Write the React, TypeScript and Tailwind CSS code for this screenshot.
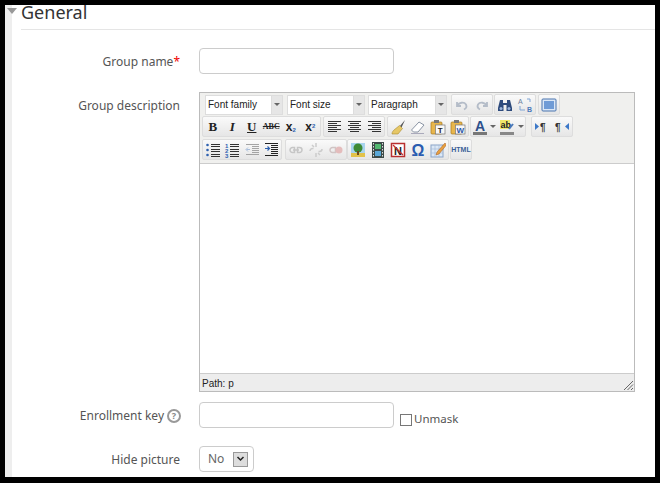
import type { ReactNode } from 'react';

const lines = (rows: [number, number][], color: string) =>
  rows.map(([x, y], i) => <rect key={i} x={x} y={y} width={15 - x} height="1" fill={color} />);

function Svg({ children, w = 16 }: { children: ReactNode; w?: number }) {
  return (
    <svg width={w} height="16" viewBox={`0 0 ${w} 16`} className="block">
      {children}
    </svg>
  );
}

function Align({ kind }: { kind: 'left' | 'center' | 'right' }) {
  const rows = [2, 4, 6, 8, 10, 12];
  const widths = [13, 9, 13, 9, 13, 9];
  return (
    <Svg>
      {rows.map((y, i) => {
        const w = widths[i];
        const x = kind === 'left' ? 2 : kind === 'right' ? 15 - w : 8.5 - w / 2;
        return <rect key={y} x={x} y={y} width={w} height="1" fill="#333" />;
      })}
    </Svg>
  );
}

function Clipboard({ letter, color }: { letter: string; color: string }) {
  return (
    <Svg>
      <rect x="1" y="3" width="11" height="12" rx="1" fill="#e8b64c" stroke="#a87a1e" strokeWidth="0.7" />
      <rect x="4" y="1" width="5" height="3" fill="#777" />
      <rect x="5.5" y="6" width="9.5" height="9" fill="#f8f8f8" stroke="#777" strokeWidth="0.7" />
      <text x="10.2" y="14" fontSize="8" fontWeight="700" textAnchor="middle" fill={color} fontFamily="Liberation Sans, sans-serif">
        {letter}
      </text>
    </Svg>
  );
}

const icons: Record<string, ReactNode> = {
  undo: (
    <Svg>
      <path d="M3 5v4h4M3.5 8.5C5 5.5 10 4.500 12 7.500c1 2 0 4-2 5" fill="none" stroke="#b4bcc8" strokeWidth="1.800" />
    </Svg>
  ),
  redo: (
    <Svg>
      <path d="M13 5v4H9M12.500 8.500C11 5.500 6 4.500 4 7.500c-1 2 0 4 2 5" fill="none" stroke="#b4bcc8" strokeWidth="1.800" />
    </Svg>
  ),
  find: (
    <Svg>
      <path d="M3 3h3v3h4V3h3l2 8v3H9.500V8h-3v6H1v-3z" fill="#2d4a7c" />
      <circle cx="4" cy="11.500" r="1.500" fill="#9ab4da" />
      <circle cx="12" cy="11.500" r="1.500" fill="#9ab4da" />
    </Svg>
  ),
  replace: (
    <Svg>
      <text x="1" y="7" fontSize="7" fill="#6b7f9e" fontFamily="Liberation Sans, sans-serif">A</text>
      <text x="10" y="15" fontSize="7" fontWeight="700" fill="#4a78b8" fontFamily="Liberation Sans, sans-serif">B</text>
      <path d="M10 2l3 0 0 3M3 9v4h5" fill="none" stroke="#7fa4d4" strokeWidth="1" />
    </Svg>
  ),
  full: (
    <Svg>
      <rect x="1" y="2" width="14" height="12" rx="1" fill="#dbe7f6" stroke="#4a74ae" />
      <rect x="3" y="4" width="10" height="8" fill="#6f9bd6" />
    </Svg>
  ),
  brush: (
    <Svg>
      <path d="M15 1l-5 6 1.500 1.500z" fill="#555" />
      <path d="M9.500 6.500l3 3L8 15H2c0-2 1-3 2-4z" fill="#e6c766" stroke="#a88a30" strokeWidth="0.6" />
    </Svg>
  ),
  eraser: (
    <Svg>
      <path d="M9 3l5 3-6 7H3.500L1.500 11z" fill="#fff" stroke="#8a94a4" />
      <path d="M1 14.500h13" stroke="#aab" strokeWidth="1" />
    </Svg>
  ),
  pasteT: <Clipboard letter="T" color="#222" />,
  pasteW: <Clipboard letter="W" color="#2a56a8" />,
  fore: (
    <Svg>
      <text x="8" y="12" fontSize="14" fontWeight="700" textAnchor="middle" fill="#2c4f8c" fontFamily="Liberation Sans, sans-serif">A</text>
      <rect x="1" y="13" width="14" height="3" fill="#777" />
    </Svg>
  ),
  hilite: (
    <Svg>
      <rect x="1" y="1" width="10" height="9" fill="#f2e76a" />
      <text x="1.500" y="8.500" fontSize="9" fontWeight="700" fill="#222" fontFamily="Liberation Sans, sans-serif">ab</text>
      <path d="M10 10l4-5" stroke="#4a78b8" strokeWidth="2" />
      <rect x="1" y="13" width="14" height="3" fill="#888" />
    </Svg>
  ),
  ltr: (
    <Svg>
      <path d="M1 4l4 3.500L1 11z" fill="#3c78c8" />
      <text x="6" y="12" fontSize="10" fontWeight="700" fill="#333" fontFamily="Liberation Sans, sans-serif">¶</text>
    </Svg>
  ),
  rtl: (
    <Svg>
      <text x="1" y="12" fontSize="10" fontWeight="700" fill="#333" fontFamily="Liberation Sans, sans-serif">¶</text>
      <path d="M15 4l-4 3.500 4 3.500z" fill="#3c78c8" />
    </Svg>
  ),
  bul: (
    <Svg>
      {[3, 8, 13].map((y) => (
        <circle key={y} cx="2.500" cy={y} r="1.300" fill="#2f62b0" />
      ))}
      {lines([[6, 2], [6, 4], [6, 7], [6, 9], [6, 12], [6, 14]], '#333')}
    </Svg>
  ),
  num: (
    <Svg>
      {[6, 11, 16].map((y, i) => (
        <text key={y} x="1" y={y} fontSize="6" fontWeight="700" fill="#2f62b0" fontFamily="Liberation Sans, sans-serif">
          {i + 1}
        </text>
      ))}
      {lines([[6, 2], [6, 4], [6, 7], [6, 9], [6, 12], [6, 14]], '#333')}
    </Svg>
  ),
  outdent: (
    <Svg>
      {lines([[2, 2], [8, 4], [8, 6], [8, 8], [8, 10], [2, 12]], '#a4a4a4')}
      <path d="M6 7.500H2.500M4 5.500l-2 2 2 2" fill="none" stroke="#a8bedc" />
    </Svg>
  ),
  indent: (
    <Svg>
      {lines([[2, 1], [8, 3], [8, 5], [8, 7], [8, 9], [8, 11], [2, 13]], '#222')}
      <path d="M2 6.500h4M4.500 4.500l2 2-2 2" fill="none" stroke="#2f62b0" strokeWidth="1.200" />
    </Svg>
  ),
  link: (
    <Svg>
      <path d="M2 8a2.500 2.500 0 0 1 2.500-2.500h2v5h-2A2.500 2.500 0 0 1 2 8zM14 8a2.500 2.500 0 0 0-2.500-2.500h-2v5h2A2.500 2.500 0 0 0 14 8zM5 8h6" fill="none" stroke="#c6c6c6" strokeWidth="1.500" />
    </Svg>
  ),
  unlink: (
    <Svg>
      <path d="M2 9a2.500 2.500 0 0 1 2.500-2.500h1M14 7a2.500 2.500 0 0 1-2.500 2.500h-1M8 1v4M8 11v4M4 3l2 2M12 13l-2-2" fill="none" stroke="#cccccc" strokeWidth="1.500" />
    </Svg>
  ),
  anchor: (
    <Svg>
      <path d="M2 8a2.500 2.500 0 0 1 2.500-2.500h3v5h-3A2.500 2.500 0 0 1 2 8z" fill="none" stroke="#d0c4c4" strokeWidth="1.500" />
      <circle cx="11" cy="8" r="3.500" fill="#e4bcbc" />
    </Svg>
  ),
  image: (
    <Svg>
      <rect x="1" y="1" width="14" height="14" fill="#a8d4ee" />
      <rect x="1" y="11" width="14" height="4" fill="#e2c24a" />
      <circle cx="8" cy="6" r="4.500" fill="#3e8a34" />
      <rect x="7" y="9" width="2" height="4" fill="#6a4a20" />
    </Svg>
  ),
  media: (
    <Svg>
      <rect x="2" y="0" width="12" height="16" fill="#3c4a48" />
      <rect x="5" y="2" width="6" height="5" fill="#52b870" />
      <rect x="5" y="9" width="6" height="5" fill="#5aa8d8" />
      {[1, 4, 7, 10, 13].map((y) => (
        <g key={y}>
          <rect x="3" y={y} width="1" height="1.500" fill="#ddd" />
          <rect x="12" y={y} width="1" height="1.500" fill="#ddd" />
        </g>
      ))}
    </Svg>
  ),
  nonbreak: (
    <Svg>
      <rect x="1.500" y="1.500" width="13" height="13" fill="#fff" stroke="#b83030" strokeWidth="1.500" />
      <text x="8" y="12.500" fontSize="11" fontWeight="700" textAnchor="middle" fill="#222" fontFamily="Liberation Sans, sans-serif">N</text>
      <path d="M3 3l10 10" stroke="#c83030" strokeWidth="1.200" />
    </Svg>
  ),
  omega: (
    <Svg>
      <text x="8" y="14" fontSize="16" fontWeight="700" textAnchor="middle" fill="#2a5cb0" fontFamily="Liberation Sans, sans-serif">Ω</text>
    </Svg>
  ),
  edit: (
    <Svg>
      <rect x="1" y="3" width="12" height="12" fill="#dce8f6" stroke="#8aa4c8" />
      <path d="M1 7h12M1 11h12M5 3v12M9 3v12" stroke="#a8bcd8" strokeWidth="0.700" />
      <path d="M15 1L7 10l-1 3 3-1 7.500-9z" fill="#e8a040" stroke="#a05820" strokeWidth="0.500" />
    </Svg>
  ),
};

function Btn({ children, w = 'w-[20px]' }: { children: ReactNode; w?: string }) {
  return <div className={`flex h-[20px] ${w} items-center justify-center`}>{children}</div>;
}

function Group({ children, className = '' }: { children: ReactNode; className?: string }) {
  return (
    <div className={`flex h-[21px] items-center rounded-[2px] border border-[#dddddd] bg-gradient-to-b from-[#fafafa] to-[#e6e6e6] ${className}`}>
      {children}
    </div>
  );
}

function Arrow() {
  return <div className="h-0 w-0 border-x-[3px] border-t-[3px] border-x-transparent border-t-[#666666]" />;
}

function Combo({ label, className }: { label: string; className: string }) {
  return (
    <div className={`flex h-[20px] border border-[#dddddd] bg-white ${className}`}>
      <div className="flex-1 pl-[2px] font-['Liberation_Sans',sans-serif] text-[10px] leading-[18px] text-[#222222]">{label}</div>
      <div className="flex w-[11px] items-center justify-center border-l border-[#dddddd] bg-[#e6e6e6]">
        <Arrow />
      </div>
    </div>
  );
}

const glyph = "font-['Liberation_Serif',serif] font-bold text-[#222222] leading-none";
const tight = 'w-[19.5px]';

function Editor() {
  return (
    <div className="flex h-[300px] w-[436px] flex-col border border-[#bbbbbb] bg-white">
      <div className="flex h-[70px] flex-col gap-[1px] bg-[#f0f0ee] pl-[2px] pt-[1px]">
        <div className="flex items-center">
          <Combo label="Font family" className="ml-[3px] w-[78px]" />
          <Combo label="Font size" className="ml-[4px] w-[78px]" />
          <Combo label="Paragraph" className="ml-[3px] w-[79px]" />
          <Group className="ml-[4px]">
            <Btn>{icons.undo}</Btn>
            <Btn>{icons.redo}</Btn>
          </Group>
          <Group className="ml-[1px]">
            <Btn>{icons.find}</Btn>
            <Btn>{icons.replace}</Btn>
          </Group>
          <Group className="ml-[2px]">
            <Btn>{icons.full}</Btn>
          </Group>
        </div>
        <div className="flex items-center">
          <Group>
            <Btn w={tight}><span className={`${glyph} text-[13px]`}>B</span></Btn>
            <Btn w={tight}><span className={`${glyph} text-[13px] italic`}>I</span></Btn>
            <Btn w={tight}><span className={`${glyph} text-[13px] underline`}>U</span></Btn>
            <Btn w={tight}><span className={`${glyph} text-[8px] line-through`}>ABC</span></Btn>
            <Btn w={tight}><span className="font-['Liberation_Sans',sans-serif] text-[12px] font-bold leading-none text-[#222222]">x<sub className="text-[6px] text-[#2f62b0]">2</sub></span></Btn>
            <Btn w={tight}><span className="font-['Liberation_Sans',sans-serif] text-[12px] font-bold leading-none text-[#222222]">x<sup className="text-[6px] text-[#2f62b0]">2</sup></span></Btn>
          </Group>
          <Group className="ml-[2px]">
            <Btn><Align kind="left" /></Btn>
            <Btn><Align kind="center" /></Btn>
            <Btn><Align kind="right" /></Btn>
          </Group>
          <Group className="ml-[2px]">
            <Btn>{icons.brush}</Btn>
            <Btn>{icons.eraser}</Btn>
            <Btn>{icons.pasteT}</Btn>
            <Btn>{icons.pasteW}</Btn>
          </Group>
          <Group className="ml-[1px]">
            <Btn w="w-[18px]">{icons.fore}</Btn>
            <Btn w="w-[8px]"><Arrow /></Btn>
            <Btn>{icons.hilite}</Btn>
            <Btn w="w-[8px]"><Arrow /></Btn>
          </Group>
          <Group className="ml-[5px]">
            <Btn>{icons.ltr}</Btn>
            <Btn>{icons.rtl}</Btn>
          </Group>
        </div>
        <div className="mt-[1px] flex items-center">
          <Group>
            <Btn w={tight}>{icons.bul}</Btn>
            <Btn w={tight}>{icons.num}</Btn>
            <Btn w={tight}>{icons.outdent}</Btn>
            <Btn w={tight}>{icons.indent}</Btn>
          </Group>
          <Group className="ml-[3px]">
            <Btn>{icons.link}</Btn>
            <Btn>{icons.unlink}</Btn>
            <Btn>{icons.anchor}</Btn>
          </Group>
          <Group>
            <Btn>{icons.image}</Btn>
            <Btn>{icons.media}</Btn>
            <Btn>{icons.nonbreak}</Btn>
            <Btn>{icons.omega}</Btn>
            <Btn>{icons.edit}</Btn>
          </Group>
          <Group className="ml-[1px]">
            <Btn>
              <span className="font-['Liberation_Sans',sans-serif] text-[7px] font-bold leading-none text-[#3a5f98]">HTML</span>
            </Btn>
          </Group>
        </div>
      </div>
      <div className="flex-1 border-y border-[#cccccc] bg-white" />
      <div className="relative flex h-[17px] items-center bg-[#ededed] pl-[2px] pt-[2px] font-['Liberation_Sans',sans-serif] text-[10px] text-[#222222]">
        Path: p
        <svg width="12" height="12" viewBox="0 0 12 12" className="absolute bottom-0 right-0">
          <path d="M11 2L2 11M11 5.500L5.500 11M11 9L9 11" stroke="#666666" strokeWidth="1" fill="none" />
        </svg>
      </div>
    </div>
  );
}

function Row({ label, children, className }: { label: ReactNode; children: ReactNode; className: string }) {
  return (
    <div className={`flex ${className}`}>
      <div className="flex h-[26px] w-[159px] shrink-0 items-center justify-end gap-[3px] pt-[1px]">{label}</div>
      <div className="ml-[19px]">{children}</div>
    </div>
  );
}

export default function App() {
  return (
    <div className="h-[483px] w-[660px] overflow-hidden bg-black pb-[6px] pl-[5px] pr-[5px] pt-[5px]">
      <div className="relative flex h-[472px] overflow-hidden bg-white font-['Noto_Sans',sans-serif] text-[12px] text-[#555555]">
        <div className="h-full w-[7px] shrink-0 bg-[#eeeeee]" />
        <div className="absolute left-[2px] top-[3px] h-0 w-0 border-x-[5px] border-t-[6px] border-x-transparent border-t-[#999999]" />
        <div className="flex-1 pl-[9px]">
          <div className="h-[25px] border-b border-[#e5e5e5] text-[18px] leading-[15px] text-[#333333]">General</div>
          <Row className="mt-[18px]" label={<span>Group name<span className="text-[#f00000]">*</span></span>}>
            <input type="text" className="block h-[26px] w-[195px] rounded-[4px] border border-[#cccccc] bg-white" />
          </Row>
          <Row className="mt-[18px]" label={<span>Group description</span>}>
            <Editor />
          </Row>
          <Row
            className="mt-[10px]"
            label={
              <>
                <span>Enrollment key</span>
                <span className="-mr-[1px] flex h-[14px] w-[14px] items-center justify-center rounded-full border-2 border-[#999999] text-[9px] font-bold leading-none text-[#888888]">?</span>
              </>
            }
          >
            <div className="flex items-start">
              <input type="text" className="block h-[26px] w-[195px] rounded-[4px] border border-[#cccccc] bg-white" />
              <input type="checkbox" className="ml-[6px] mt-[12px] h-[12px] w-[12px] appearance-none border border-[#777777] bg-white" />
              <span className="ml-[2px] mt-[8px] text-[11.5px] leading-[17px]">Unmask</span>
            </div>
          </Row>
          <Row className="mt-[18px]" label={<span>Hide picture</span>}>
            <div className="flex h-[26px] w-[55px] items-center rounded-[4px] border border-[#cccccc] bg-white pl-[8px] text-[#666666]">
              <span className="w-[25px]">No</span>
              <div className="flex h-[15px] w-[15px] items-center justify-center border border-[#999999] bg-[#dddddd]">
                <svg width="9" height="6" viewBox="0 0 9 6">
                  <path d="M1.500 1l3 3 3-3" fill="none" stroke="#222222" strokeWidth="1.500" />
                </svg>
              </div>
            </div>
          </Row>
        </div>
      </div>
    </div>
  );
}
